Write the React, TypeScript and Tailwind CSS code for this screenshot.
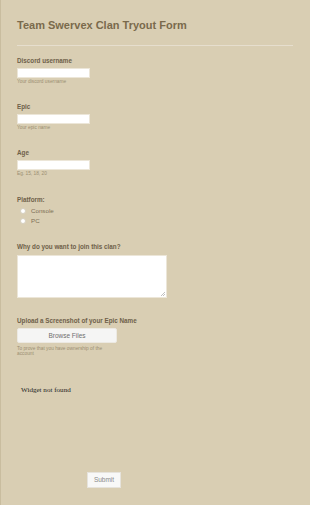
import React from 'react';

const labelCls = "text-[6.3px] font-bold leading-[9px] text-[#6e6049]";
const helpCls = "text-[4.8px] leading-[6px] text-[#9b8e72] mt-[1px]";

const TextField = ({ label, help }: { label: string; help: string }) => (
  <div className="flex flex-col">
    <div className={labelCls}>{label}</div>
    <input className="mt-[3px] h-[10px] w-[73px] border border-[#ece6d8] bg-white outline-none" />
    <div className={helpCls}>{help}</div>
  </div>
);

const Radio = ({ label }: { label: string }) => (
  <label className="flex items-center gap-[5px] pl-[3px] text-[6.2px] leading-[10px] text-[#7d6f55]">
    <span className="h-[6px] w-[6px] rounded-full border border-[#d6cfbf] bg-white" />
    {label}
  </label>
);

export default function App() {
  return (
    <div
      className="h-[505px] w-[310px] overflow-hidden border-l border-[#c9bd9f] bg-[#d9ceb3] pl-[16px] pr-[17px]"
      style={{ fontFamily: '"Liberation Sans", Arial, sans-serif' }}
    >
      <h1 className="pt-[18px] text-[11px] font-bold leading-[15px] text-[#7a6a4c]">
        Team Swervex Clan Tryout Form
      </h1>
      <div className="mt-[12px] h-px w-full bg-[#e6dece]" />

      <div className="mt-[10px] flex flex-col gap-[17px]">
        <TextField label="Discord username" help="Your discord username" />
        <TextField label="Epic" help="Your epic name" />
        <TextField label="Age" help="Eg. 15, 18, 20" />
      </div>

      <div className="mt-[18px]">
        <div className={labelCls}>Platform:</div>
        <div className="mt-[1.5px] flex flex-col">
          <Radio label="Console" />
          <Radio label="PC" />
        </div>
      </div>

      <div className="mt-[16.5px]">
        <div className={labelCls}>Why do you want to join this clan?</div>
        <div className="relative mt-[3.5px] h-[43px] w-[150px] border border-[#ece6d8] bg-white">
          <svg className="absolute bottom-[1px] right-[1px]" width="4" height="4" viewBox="0 0 4 4">
            <path d="M4 0L0 4M4 2L2 4" stroke="#999" strokeWidth="0.6" />
          </svg>
        </div>
      </div>

      <div className="mt-[18.5px]">
        <div className={labelCls}>Upload a Screenshot of your Epic Name</div>
        <button className="mt-[3px] flex h-[15px] w-[100px] items-center justify-center rounded-[2px] border border-[#ece9e2] bg-[#f5f5f4] text-[6.5px] text-[#6f6f6f]">
          Browse Files
        </button>
        <div className="mt-[2.5px] w-[92px] text-[4.8px] leading-[5px] text-[#9b8e72]">
          To prove that you have ownership of the account
        </div>
      </div>

      <div
        className="mt-[30.5px] pl-[4px] text-[7.1px] leading-[9px] text-[#222]"
        style={{ fontFamily: '"Liberation Serif", "Times New Roman", serif' }}
      >
        Widget not found
      </div>

      <div className="mt-[76.5px] pl-[70px]">
        <button className="flex h-[16px] w-[34px] items-center justify-center border border-[#e6e3dc] bg-[#f8f8f7] text-[6.5px] text-[#8a8a8a]">
          Submit
        </button>
      </div>
    </div>
  );
}
